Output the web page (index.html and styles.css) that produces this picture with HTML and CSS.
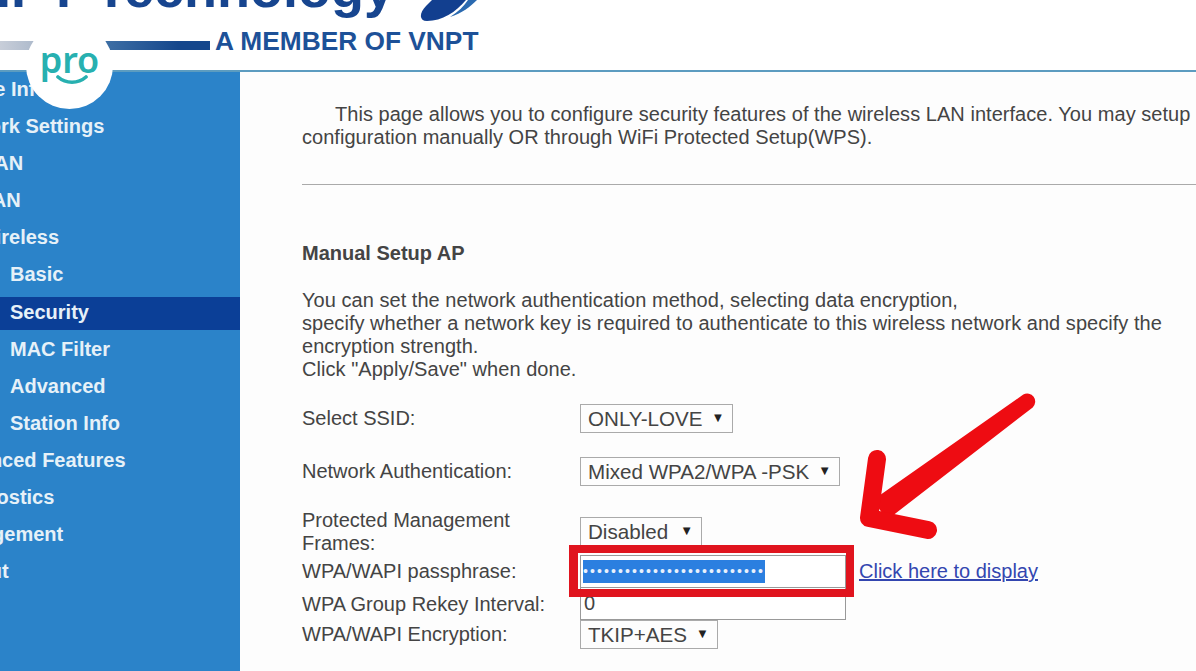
FILE: index.html
```html
<!DOCTYPE html>
<html lang="en">
<head>
  <meta charset="UTF-8">
  <title>Wireless Security</title>
  <link rel="stylesheet" href="styles.css">
</head>
<body>

<div class="page">
  <header class="top">
    <div class="brand">VNPT Technology</div>
    <svg class="swoosh" width="70" height="24" viewBox="0 0 70 24">
      <path d="M9 21 C1 21 1 13 8 6 L14 0 L48 0 C38 12 24 21 9 21 Z" fill="#123f8f"/>
      <path d="M32 17 C44 13 52 7 59 0 L50 0 C46 6 40 12 32 17 Z" fill="#2b6ab0"/>
    </svg>
    <div class="tagline">
      <span class="tagline-bar"></span>
      <span class="tagline-text">A MEMBER OF VNPT</span>
    </div>
  </header>

  <div class="content">
    <nav class="side">
      <a class="item">Device Info</a>
      <a class="item">Network Settings</a>
      <a class="item lan">LAN</a>
      <a class="item wan">WAN</a>
      <a class="item mid">Wireless</a>
      <a class="item sub">Basic</a>
      <a class="item sub active">Security</a>
      <a class="item sub">MAC Filter</a>
      <a class="item sub">Advanced</a>
      <a class="item sub">Station Info</a>
      <a class="item">Advanced Features</a>
      <a class="item">Diagnostics</a>
      <a class="item">Management</a>
      <a class="item">Logout</a>
    </nav>

    <main class="main">
      <p class="intro"><span class="indent"></span>This page allows you to configure security features of the wireless LAN interface. You may setup<br>configuration manually OR through WiFi Protected Setup(WPS).</p>
      <hr class="rule">
      <h2 class="title">Manual Setup AP</h2>
      <p class="desc">You can set the network authentication method, selecting data encryption,<br>
        specify whether a network key is required to authenticate to this wireless network and specify the<br>
        encryption strength.<br>
        Click "Apply/Save" when done.</p>

      <div class="form">
        <label class="lbl row-ssid">Select SSID:</label>
        <div class="field row-ssid"><div class="sel"><span>ONLY-LOVE</span><i class="caret">▼</i></div></div>

        <label class="lbl row-auth">Network Authentication:</label>
        <div class="field row-auth"><div class="sel"><span>Mixed WPA2/WPA -PSK</span><i class="caret">▼</i></div></div>

        <label class="lbl lbl-pmf">Protected Management<br>Frames:</label>
        <div class="field row-pmf"><div class="sel sel-wide"><span>Disabled</span><i class="caret">▼</i></div></div>

        <label class="lbl row-pass">WPA/WAPI passphrase:</label>
        <div class="field row-pass">
          <div class="input pass">
            <span class="selected">••••••••••••••••••••••••••</span>
            <span class="redbox"></span>
          </div>
          <a class="show" href="#">Click here to display</a>
        </div>

        <label class="lbl row-rekey">WPA Group Rekey Interval:</label>
        <div class="field row-rekey"><div class="input rekey">0</div></div>

        <label class="lbl row-enc">WPA/WAPI Encryption:</label>
        <div class="field row-enc"><div class="sel"><span>TKIP+AES</span><i class="caret">▼</i></div></div>
      </div>
    </main>
  </div>

  <div class="badge">
    <span class="badge-text">pro</span>
    <svg class="smile" width="34" height="10" viewBox="0 0 34 10" fill="none">
      <path d="M3 2 C11 9 23 9 31 2" stroke="#27b0b0" stroke-width="3.6" stroke-linecap="round"/>
    </svg>
  </div>

  <svg class="arrow" width="190" height="150" viewBox="0 0 190 150" fill="none">
    <path d="M171.3 2.6 A8 8 0 0 1 180.7 15.4 L35 128 L21 108 Z" fill="#ee0c12"/>
    <path d="M25 67 L17 126 L76 138" stroke="#ee0c12" stroke-width="18" stroke-linecap="round" stroke-linejoin="round"/>
  </svg>
</div>

</body>
</html>
```
FILE: styles.css
```css
html, body {
  margin: 0;
  height: 100%;
  overflow: hidden;
  background: #fdfdfd;
}

.page {
  position: relative;
  width: 1196px;
  height: 671px;
  overflow: hidden;
  font-family: 'Liberation Sans', Arial, sans-serif;
  color: #444;
}

.top {
  position: relative;
  height: 72px;
  box-sizing: border-box;
  border-bottom: 2px solid #5c9cc0;
  background: #fff;
  overflow: hidden;
}

.brand {
  position: absolute;
  left: -64px;
  top: -39px;
  font-size: 54px;
  line-height: 54px;
  font-weight: bold;
  white-space: nowrap;
  color: #17458f;
}

.swoosh {
  position: absolute;
  left: 418px;
  top: 0;
}

.tagline {
  display: flex;
  align-items: flex-start;
  padding-top: 27px;
  gap: 5px;
}

.tagline-bar {
  width: 210px;
  height: 9px;
  margin-top: 14px;
  background: linear-gradient(90deg, #c8ced9 0%, #b0bccd 15%, #3e6fa5 50%, #15478c 85%);
}

.tagline-text {
  font-size: 26.3px;
  line-height: 28px;
  font-weight: bold;
  color: #1d5198;
}

.content {
  display: flex;
  height: 599px;
}

.side {
  width: 240px;
  flex: none;
  background: #2b83c9;
  overflow: hidden;
}

.item {
  display: block;
  height: 37.1px;
  line-height: 34px;
  margin-left: -59px;
  font-size: 20px;
  font-weight: bold;
  white-space: nowrap;
  color: #e6f1f8;
}

.item.mid { padding-left: 36px; }
.item.lan { padding-left: 41px; }
.item.wan { padding-left: 33px; }
.item.sub { padding-left: 69px; }

.item.active {
  background: linear-gradient(transparent 1.5px, #0b3f97 1.5px, #0b3f97 35.5px, transparent 35.5px);
}

.main {
  flex: 1;
  min-width: 0;
  padding: 31px 0 0 62px;
  font-size: 20px;
  line-height: 23px;
}

.intro, .desc {
  margin: 0;
  white-space: nowrap;
  letter-spacing: 0.04px;
}

.indent {
  display: inline-block;
  width: 33px;
}

.rule {
  margin: 35px 0 0;
  border: none;
  border-top: 1px solid #aaa;
}

.title {
  margin: 57px 0 0;
  font-size: 20px;
  line-height: 23px;
  font-weight: bold;
  color: #444;
}

.desc {
  margin-top: 24px;
}

.form {
  display: grid;
  grid-template-columns: 278px 1fr;
  grid-template-rows: 29px 24px 29px 31px 29px 9px 33px 32px 29px;
  margin-top: 23px;
}

.lbl { align-self: center; }

.row-ssid { grid-row: 1; }
.row-auth { grid-row: 3; }
.row-pmf { grid-row: 5; }
.row-pass { grid-row: 7; }
.row-rekey { grid-row: 8; }
.row-enc { grid-row: 9; }

.lbl-pmf {
  grid-row: 4 / 7;
  align-self: end;
}

.field {
  display: flex;
  align-items: stretch;
  min-width: 0;
}

.sel {
  display: flex;
  align-items: center;
  gap: 9px;
  height: 29px;
  box-sizing: border-box;
  padding: 0 8px 0 7px;
  border: 1px solid #aaa;
  background: #fdfdfd;
  font-size: 20.6px;
  white-space: nowrap;
}

.sel-wide {
  gap: 12px;
}

.caret {
  font-style: normal;
  font-size: 13px;
  line-height: 13px;
  margin-top: -3px;
  color: #222;
}

.input {
  position: relative;
  box-sizing: border-box;
  width: 266px;
  display: flex;
  align-items: center;
  padding: 0 2px;
  border: 1px solid #999;
  background: #fff;
}

.rekey {
  font-size: 20px;
  border-top: none;
  padding: 0 3px;
}

.selected {
  display: block;
  width: 182px;
  height: 23px;
  line-height: 23px;
  overflow: hidden;
  background: #2b7fe0;
  color: #e8f1fc;
  font-size: 14px;
  letter-spacing: 2.1px;
  white-space: nowrap;
}

/* callout drawn over the field */
.redbox {
  position: absolute;
  z-index: 1;
  left: -12px;
  right: -9px;
  top: -11px;
  bottom: -10px;
  border: 8px solid #e0141e;
  border-left-width: 9px;
}

.show {
  align-self: center;
  margin-left: 13px;
  color: #3346b0;
  font-size: 20px;
  white-space: nowrap;
}

.badge {
  position: absolute;
  left: 26px;
  top: 22px;
  width: 87px;
  height: 87px;
  border-radius: 50%;
  background: #fff;
  display: flex;
  justify-content: center;
}

.badge-text {
  font-family: 'Noto Sans', sans-serif;
  font-size: 36px;
  font-weight: 600;
  line-height: 40px;
  margin-top: 18px;
  color: #27b0b0;
}

.smile {
  position: absolute;
  left: 29px;
  top: 53px;
}

.arrow {
  position: absolute;
  left: 852px;
  top: 392px;
}
```
